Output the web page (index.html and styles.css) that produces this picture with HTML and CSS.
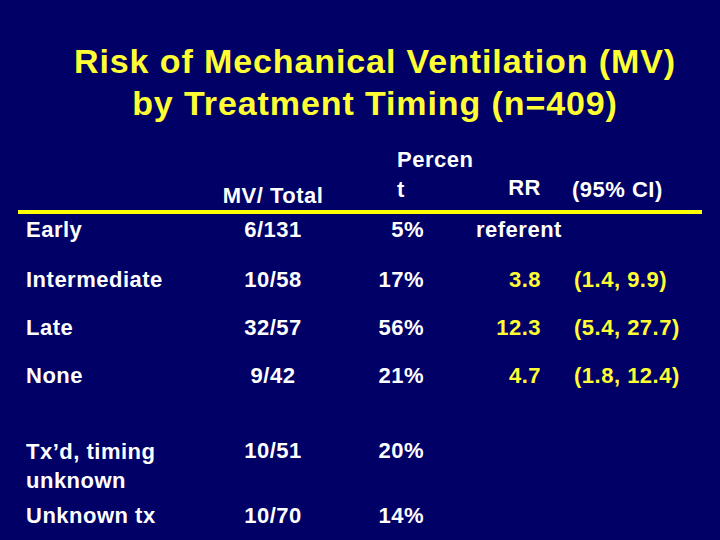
FILE: index.html
```html
<!DOCTYPE html>
<html lang="en">
<head>
<meta charset="utf-8">
<title>Risk of Mechanical Ventilation by Treatment Timing</title>
<link rel="stylesheet" href="styles.css">
</head>
<body>
<main class="slide">
  <h1 class="title">Risk of Mechanical Ventilation (MV)<br>by Treatment Timing (n=409)</h1>
  <section class="table">
    <div class="row head">
      <div class="cell label"></div>
      <div class="cell total h-total">MV/ Total</div>
      <div class="cell pct h-pct">Percen<br>t</div>
      <div class="cell rr h-rr">RR</div>
      <div class="cell ci h-ci">(95% CI)</div>
    </div>
    <div class="rule"></div>
    <div class="row r-first">
      <div class="cell label">Early</div>
      <div class="cell total">6/131</div>
      <div class="cell pct">5%</div>
      <div class="cell rr referent">referent</div>
      <div class="cell ci"></div>
    </div>
    <div class="row">
      <div class="cell label">Intermediate</div>
      <div class="cell total">10/58</div>
      <div class="cell pct">17%</div>
      <div class="cell rr hl">3.8</div>
      <div class="cell ci hl">(1.4, 9.9)</div>
    </div>
    <div class="row">
      <div class="cell label">Late</div>
      <div class="cell total">32/57</div>
      <div class="cell pct">56%</div>
      <div class="cell rr hl">12.3</div>
      <div class="cell ci hl">(5.4, 27.7)</div>
    </div>
    <div class="row r-none">
      <div class="cell label">None</div>
      <div class="cell total">9/42</div>
      <div class="cell pct">21%</div>
      <div class="cell rr hl">4.7</div>
      <div class="cell ci hl">(1.8, 12.4)</div>
    </div>
    <div class="row r-txd">
      <div class="cell label two">Tx’d, timing<br>unknown</div>
      <div class="cell total">10/51</div>
      <div class="cell pct">20%</div>
      <div class="cell rr"></div>
      <div class="cell ci"></div>
    </div>
    <div class="row">
      <div class="cell label">Unknown tx</div>
      <div class="cell total">10/70</div>
      <div class="cell pct">14%</div>
      <div class="cell rr"></div>
      <div class="cell ci"></div>
    </div>
  </section>
</main>
</body>
</html>
```

FILE: styles.css
```css
html, body {
  margin: 0;
  padding: 0;
  background: #000066;
}

.slide {
  width: 720px;
  height: 540px;
  overflow: hidden;
  background: #000066;
  font-family: "Liberation Sans", Arial, sans-serif;
  font-weight: bold;
  color: #ffffff;
}

.title {
  margin: 0;
  padding: 40px 0 0 30px;
  font-size: 34px;
  line-height: 42px;
  letter-spacing: 0.9px;
  font-weight: bold;
  text-align: center;
  color: #ffff33;
}

.table {
  margin-left: 18px;
  width: 684px;
  font-size: 22px;
  line-height: 28px;
  letter-spacing: 0.5px;
}

.row {
  display: grid;
  grid-template-columns: 182px 146px 84px 115px 157px;
  height: 48px;
  align-items: start;
  padding-top: 2px;
  box-sizing: border-box;
}

.row.head {
  height: 86px;
  padding-top: 0;
  align-items: end;
}

.row.r-first { height: 50px; }
.row.r-none { height: 75px; }
.row.r-txd { height: 65px; }

.cell {
  white-space: nowrap;
}

.label { padding-left: 8px; }
.label.two { line-height: 29px; }

.total { text-align: center; }

.pct {
  text-align: right;
  padding-right: 6px;
}

.rr {
  text-align: right;
  padding-right: 4px;
}

.ci {
  padding-left: 29px;
}

.referent {
  text-align: left;
  padding-left: 46px;
  padding-right: 0;
}

.hl { color: #ffff33; }

.h-total { padding-bottom: 0; }
.h-pct {
  text-align: left;
  padding-left: 51px;
  padding-right: 0;
  line-height: 30px;
  padding-bottom: 5px;
}
.h-rr { padding-bottom: 8px; }
.h-ci { padding-left: 27px; padding-bottom: 6px; }

.rule {
  height: 4px;
  background: #ffff00;
}
```
